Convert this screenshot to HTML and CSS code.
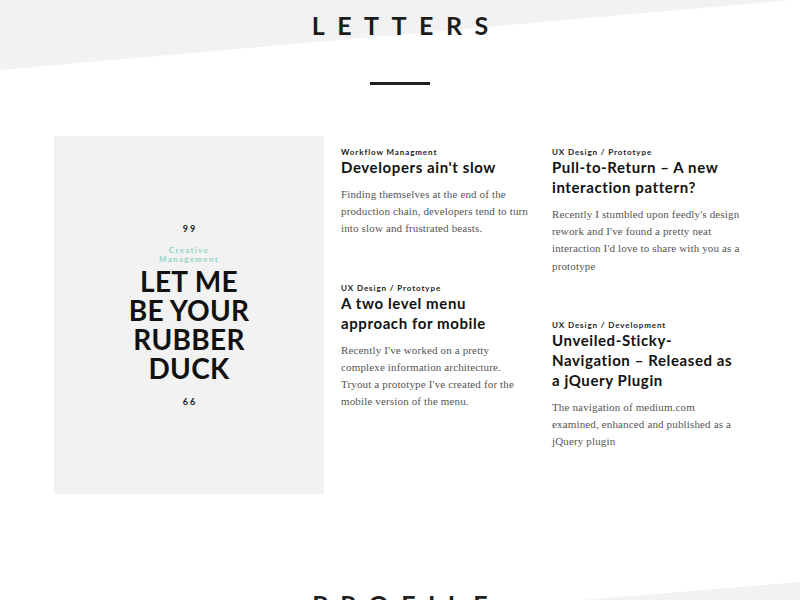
FILE: index.html
```html
<!DOCTYPE html>
<html lang="en">
<head>
<meta charset="utf-8">
<title>Letters</title>
<link rel="stylesheet" href="styles.css">
</head>
<body>
<section class="letters">
  <header class="section-head">
    <h1 class="section-title">LETTERS</h1>
    <div class="rule"></div>
  </header>
  <div class="grid">
    <div class="feature">
      <div class="quote">99</div>
      <div class="feature-cat">Creative<br>Management</div>
      <div class="feature-title">LET ME<br>BE YOUR<br>RUBBER<br>DUCK</div>
      <div class="quote quote-bottom">66</div>
    </div>
    <div class="col">
      <article class="post">
        <div class="cat">Workflow Managment</div>
        <h2 class="title">Developers ain't slow</h2>
        <p class="text">Finding themselves at the end of the production chain, developers tend to turn into slow and frustrated beasts.</p>
      </article>
      <article class="post">
        <div class="cat">UX Design / Prototype</div>
        <h2 class="title">A two level menu approach for mobile</h2>
        <p class="text">Recently I've worked on a pretty complexe information architecture. Tryout a prototype I've created for the mobile version of the menu.</p>
      </article>
    </div>
    <div class="col">
      <article class="post">
        <div class="cat">UX Design / Prototype</div>
        <h2 class="title">Pull-to-Return – A new interaction pattern?</h2>
        <p class="text">Recently I stumbled upon feedly's design rework and I've found a pretty neat interaction I'd love to share with you as a prototype</p>
      </article>
      <article class="post">
        <div class="cat">UX Design / Development</div>
        <h2 class="title">Unveiled-Sticky-Navigation – Released as a jQuery Plugin</h2>
        <p class="text">The navigation of medium.com examined, enhanced and published as a jQuery plugin</p>
      </article>
    </div>
  </div>
</section>
<section class="profile">
  <h1 class="section-title">PROFILE</h1>
</section>
</body>
</html>
```
FILE: styles.css
```css
html, body {
  margin: 0;
  padding: 0;
  background: #fff;
}
body {
  font-family: "Lato", "Liberation Sans", sans-serif;
  color: #161616;
  overflow: hidden;
  height: 600px;
}
.letters {
  position: relative;
  height: 580px;
}
.letters::before {
  content: "";
  position: absolute;
  left: 0;
  top: 0;
  width: 800px;
  height: 70px;
  background: #f2f2f2;
  clip-path: polygon(0 0, 100% 0, 99% 0, 0 100%);
  z-index: 0;
}
.section-head {
  position: relative;
  z-index: 1;
  display: flex;
  flex-direction: column;
  align-items: center;
  padding-top: 9px;
}
.section-title {
  margin: 0;
  font-size: 25px;
  line-height: 32px;
  font-weight: 700;
  letter-spacing: 12.5px;
  padding-left: 12.5px;
  color: #1c1c1c;
  text-align: center;
}
.rule {
  width: 60px;
  height: 3px;
  background: #222;
  margin-top: 41px;
}
.grid {
  position: relative;
  z-index: 1;
  display: grid;
  grid-template-columns: 270px 194px 194px;
  column-gap: 17px;
  margin: 51px 0 0 54px;
  align-items: start;
}
.feature {
  background: #f2f2f2;
  height: 358px;
  display: flex;
  flex-direction: column;
  align-items: center;
  justify-content: center;
  text-align: center;
}
.quote {
  font-size: 9px;
  font-weight: 700;
  letter-spacing: 2px;
  padding-left: 2px;
  line-height: 10px;
  color: #222;
}
.feature-cat {
  margin-top: 12px;
  font-size: 8px;
  line-height: 9px;
  font-weight: 700;
  letter-spacing: 1.3px;
  color: #93d2c6;
}
.feature-title {
  margin-top: 3px;
  font-size: 28px;
  line-height: 29px;
  font-weight: 700;
  color: #111;
  letter-spacing: 0.3px;
}
.quote-bottom {
  margin-top: 14px;
}
.col {
  display: flex;
  flex-direction: column;
  gap: 45px;
  padding-top: 11px;
  padding-right: 4px;
}
.post {
  display: flex;
  flex-direction: column;
}
.cat {
  font-size: 8px;
  line-height: 10px;
  font-weight: 700;
  letter-spacing: 0.9px;
  color: #222;
}
.title {
  margin: 0;
  font-size: 15px;
  line-height: 20px;
  font-weight: 700;
  letter-spacing: 0.6px;
  color: #111;
}
.text {
  margin: 9px 0 0;
  font-family: "Liberation Serif", "DejaVu Serif", serif;
  font-size: 11px;
  line-height: 17.2px;
  letter-spacing: 0.15px;
  color: #555;
}
.profile {
  position: relative;
  height: 100px;
  display: flex;
  justify-content: center;
}
.profile::before {
  content: "";
  position: absolute;
  left: 0;
  top: 0;
  width: 800px;
  height: 100px;
  background: #f2f2f2;
  clip-path: polygon(100% 2px, 100% 100%, 0 100%, 0 68px);
  z-index: 0;
}
.profile .section-title {
  position: relative;
  z-index: 1;
  margin-top: 8px;
}
```
